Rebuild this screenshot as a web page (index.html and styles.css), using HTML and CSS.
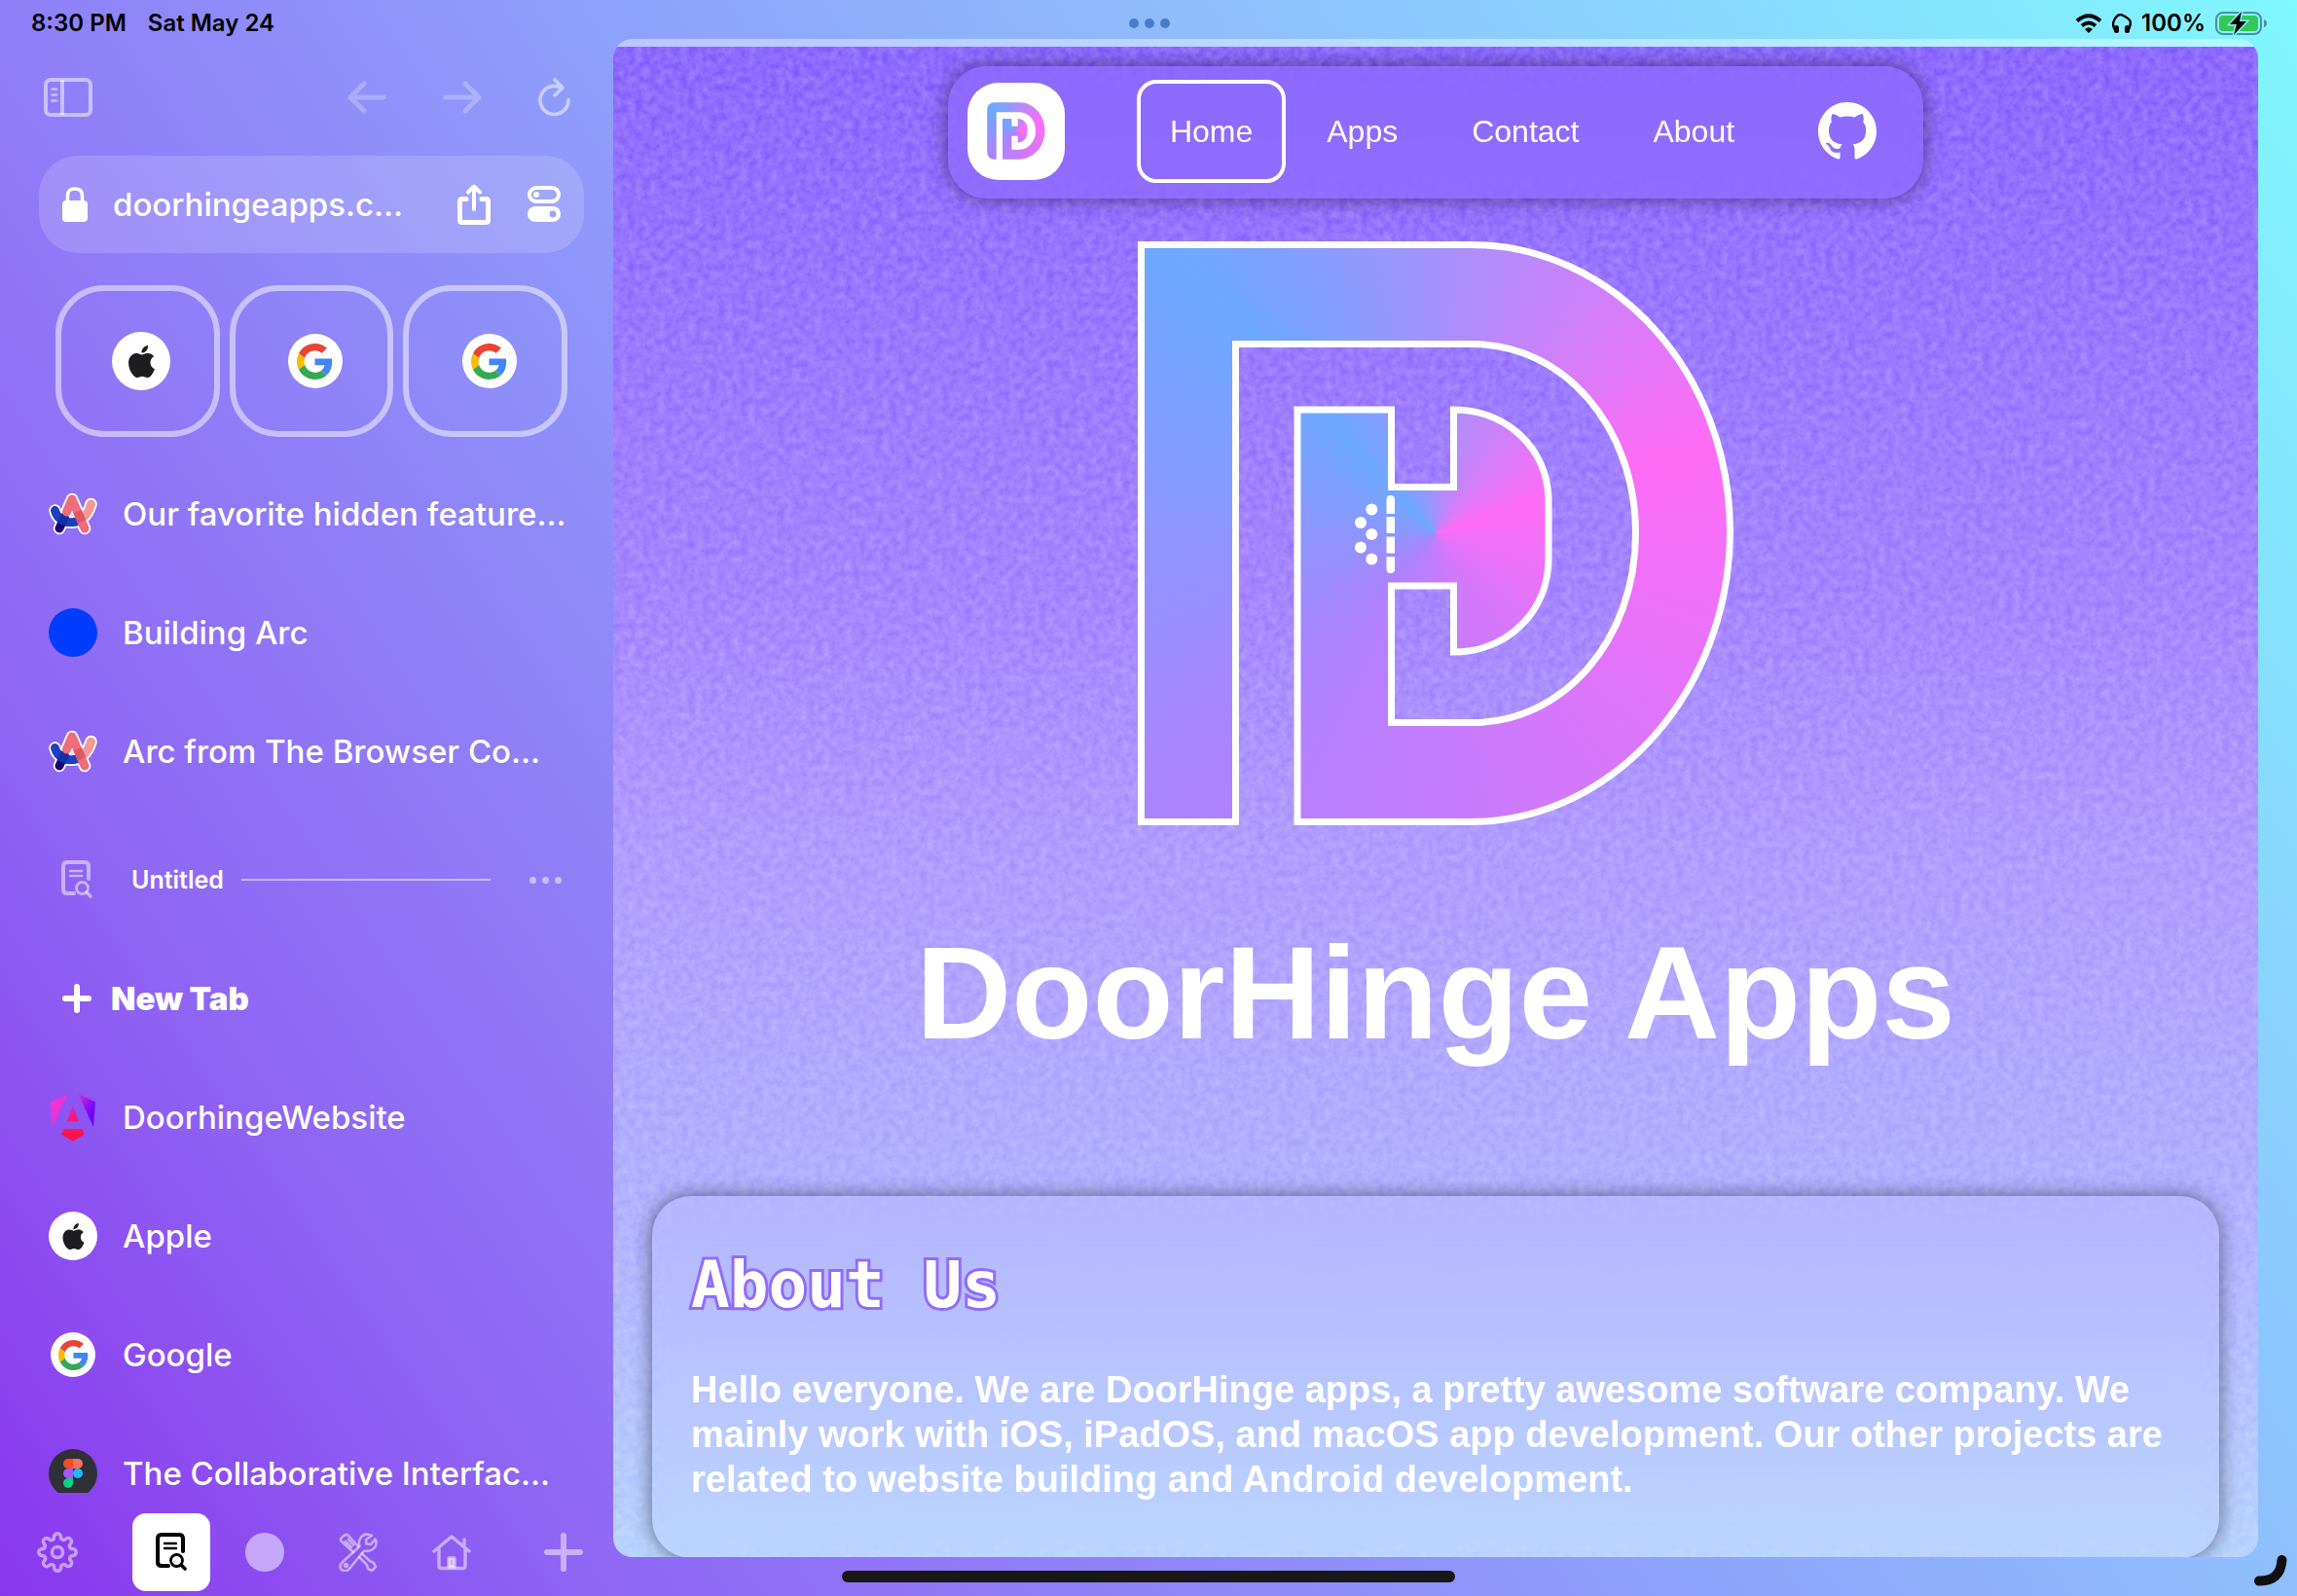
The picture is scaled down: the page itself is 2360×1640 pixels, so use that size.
FILE: index.html
```html
<!DOCTYPE html>
<html lang="en">
<head>
<meta charset="utf-8">
<meta name="viewport" content="width=device-width, initial-scale=1">
<title>DoorHinge Apps</title>
<link rel="stylesheet" href="styles.css">
</head>
<body>
<svg class="defs" aria-hidden="true">
  <defs>
    <path id="door" d="M3.500 3.500H341.500C490 3.500 608.500 136 608.500 298S490 596.500 341.500 596.500H164V173H260.500V252.500H324.500V173C380 173 422 214 422 267V326C422 380 380 422 324.500 422V354H260.500V494.500H344C437 494.500 511.500 410 511.500 300S437 105.500 344 105.500H100.500V596.500H3.500Z"/>
    <clipPath id="door-clip" clipPathUnits="objectBoundingBox"><use href="#door" transform="scale(.00163399 .00166667)"/></clipPath>
    <linearGradient id="ng1" x1="0" y1="0" x2="1" y2=".4"><stop offset="0" stop-color="#ff34d0"/><stop offset=".5" stop-color="#e030d8"/><stop offset="1" stop-color="#7000ff"/></linearGradient>
    <linearGradient id="ng2" x1="0" y1="0" x2="0" y2="1"><stop offset="0" stop-color="#f0209c" stop-opacity=".6"/><stop offset=".8" stop-color="#ff1048"/></linearGradient>
    <symbol id="apple" viewBox="0 0 24 24"><path d="M12.152 6.896c-.948 0-2.415-1.078-3.960-1.040-2.040.027-3.910 1.183-4.961 3.014-2.117 3.675-.546 9.103 1.519 12.090 1.013 1.454 2.208 3.090 3.792 3.039 1.520-.065 2.090-.987 3.935-.987 1.831 0 2.350.987 3.960.948 1.637-.026 2.676-1.480 3.676-2.948 1.156-1.688 1.636-3.325 1.662-3.415-.039-.013-3.182-1.221-3.220-4.857-.026-3.040 2.480-4.494 2.597-4.559-1.429-2.090-3.623-2.324-4.390-2.376-2-.156-3.675 1.090-4.610 1.090zM15.530 3.830c.843-1.012 1.400-2.427 1.245-3.830-1.207.052-2.662.805-3.532 1.818-.780.896-1.454 2.338-1.273 3.714 1.338.104 2.715-.688 3.559-1.701"/></symbol>
    <symbol id="google" viewBox="0 0 48 48">
      <path fill="#ea4335" d="M24 9.500c3.540 0 6.710 1.220 9.210 3.600l6.850-6.850C35.900 2.380 30.470 0 24 0 14.620 0 6.510 5.380 2.560 13.220l7.980 6.190C12.430 13.720 17.740 9.500 24 9.500z"/>
      <path fill="#4285f4" d="M46.980 24.550c0-1.570-.15-3.090-.38-4.550H24v9.020h12.940c-.58 2.960-2.260 5.480-4.780 7.180l7.730 6c4.510-4.180 7.090-10.360 7.090-17.650z"/>
      <path fill="#fbbc05" d="M10.530 28.590c-.48-1.450-.76-2.990-.76-4.590s.27-3.140.76-4.590l-7.980-6.190C.92 16.460 0 20.120 0 24c0 3.880.92 7.540 2.560 10.780l7.970-6.190z"/>
      <path fill="#34a853" d="M24 48c6.480 0 11.930-2.130 15.890-5.810l-7.730-6c-2.150 1.450-4.920 2.300-8.160 2.300-6.260 0-11.570-4.220-13.470-9.910l-7.980 6.190C6.510 42.620 14.620 48 24 48z"/>
    </symbol>
    <symbol id="arc" viewBox="0 0 50 44">
      <g fill="none" stroke="#fff" stroke-width="12.500" stroke-linecap="round" stroke-linejoin="round"><path d="M6.500 18.500C10 34 36 38 43.500 12"/><path d="M11 37L24 7L37 37"/></g>
      <g fill="none" stroke-width="9" stroke-linecap="round" stroke-linejoin="round">
        <path d="M43.500 12C42 18 40 21.500 37 24.500" stroke="#f49a96"/>
        <path d="M6.500 18.500C9 29 20 33 30 29.500" stroke="#1d3fc0"/>
        <path d="M11 37L13.500 31.500" stroke="#1c0079"/>
        <path d="M13 33L17 23" stroke="#1230a8" stroke-linecap="butt"/>
        <path d="M18.500 20L24 7L37 37" stroke="#ef6c7c"/>
        <path d="M29.500 19.500L34 30" stroke="#dd5767" stroke-linecap="butt"/>
      </g>
    </symbol>
    <symbol id="docsearch" viewBox="0 0 32 40">
      <g fill="none" stroke="currentColor" stroke-linecap="round">
        <path stroke-width="4" d="M13 34H6Q2 34 2 30V6Q2 2 6 2H24Q28 2 28 6V19"/>
        <path stroke-width="2.500" d="M9 11H21M9 16H21"/>
        <circle stroke-width="2.800" cx="21.500" cy="28.500" r="6"/><path stroke-width="3.600" d="M26 33L30 37"/>
      </g>
    </symbol>
  </defs>
</svg>

<header class="status">
  <div class="status-side"><span>8:30 PM</span><span>Sat May 24</span></div>
  <div class="multitask"><i></i><i></i><i></i></div>
  <div class="status-side status-right">
    <svg width="28" height="20" viewBox="0 0 28 20" fill="none" stroke="#000" stroke-width="4"><path d="M2 7.500Q14 -3 26 7.500M7 12.500Q14 6.500 21 12.500"/><path d="M10 16Q14 12.500 18 16L14 20Z" fill="#000" stroke="none"/></svg>
    <svg width="20" height="20" viewBox="0 0 20 20"><path d="M4 18Q-1 12 2.500 6T10 1.300T17.500 6T16 18" fill="none" stroke="#000" stroke-width="2.400"/><rect x="2" y="12" width="5" height="8" rx="2.500"/><rect x="13" y="12" width="5" height="8" rx="2.500"/></svg>
    <span>100%</span>
    <svg width="54" height="26" viewBox="0 0 54 26"><rect x="1" y="2" width="46" height="22" rx="7" fill="none" stroke="#4e8f9a" stroke-width="2"/><path d="M50 9Q53 10 53 13T50 17Z" fill="#4e8f9a"/><rect x="4" y="5" width="40" height="16" rx="4" fill="#34c759"/><path d="M27 1L15 14H22L19 25L32 11H25Z" fill="#000" stroke="#83f0fd" stroke-width="3" paint-order="stroke"/></svg>
  </div>
</header>

<div class="browser">
  <aside class="sidebar">
    <div class="toolbar">
      <button aria-label="Toggle sidebar"><svg width="50" height="40" viewBox="0 0 50 40" fill="none" stroke="currentColor"><rect x="2" y="2" width="46" height="36" rx="5" stroke-width="4"/><path d="M19 2V38" stroke-width="4"/><path d="M8.500 11.500H13M8.500 17.500H13M8.500 23.500H13" stroke-width="2.600" stroke-linecap="round"/></svg></button>
      <button class="push faint" aria-label="Back"><svg width="40" height="34" viewBox="0 0 40 34"><path d="M37 17H3M17 3L3 17L17 31" fill="none" stroke="currentColor" stroke-width="5" stroke-linecap="round" stroke-linejoin="round"/></svg></button>
      <button class="faint" aria-label="Forward"><svg width="40" height="34" viewBox="0 0 40 34"><path d="M3 17H37M23 3L37 17L23 31" fill="none" stroke="currentColor" stroke-width="5" stroke-linecap="round" stroke-linejoin="round"/></svg></button>
      <button aria-label="Reload"><svg width="34" height="40" viewBox="0 0 34 40"><path d="M31 22.500A14.500 14.500 0 1 1 24 10.500M17 2L25 10L17 18" fill="none" stroke="currentColor" stroke-width="3.600" stroke-linecap="round" stroke-linejoin="round"/></svg></button>
    </div>

    <div class="address">
      <svg width="26" height="36" viewBox="0 0 26 36"><rect y="14" width="26" height="22" rx="4" fill="#fff"/><path d="M5.500 16V9Q5.500 2 13 2T20.500 9V16" fill="none" stroke="#fff" stroke-width="3.600"/></svg>
      <button class="url">doorhingeapps.c...</button>
      <button aria-label="Share"><svg width="34" height="42" viewBox="0 0 34 42" fill="none" stroke="#fff" stroke-width="5" stroke-linecap="round" stroke-linejoin="round"><path d="M9 15.500H5Q2.500 15.500 2.500 18V37Q2.500 39.500 5 39.500H29Q31.500 39.500 31.500 37V18Q31.500 15.500 29 15.500H25"/><path d="M17 26V3M11 8.500L17 2.500L23 8.500" stroke-width="4"/></svg></button>
      <button aria-label="Site controls"><svg width="34" height="38" viewBox="0 0 34 38"><rect x="2" y="2" width="30" height="14" rx="7" fill="none" stroke="#fff" stroke-width="4"/><circle cx="9" cy="9" r="3" fill="#fff"/><rect y="21" width="34" height="16" rx="8" fill="#fff"/><circle cx="26" cy="29" r="3.400" fill="#9ea4f9"/></svg></button>
    </div>

    <div class="pins">
      <button class="pin" aria-label="Apple"><span class="disc disc-lg"><svg width="33" height="33" fill="#1d1d1f"><use href="#apple"/></svg></span></button>
      <button class="pin" aria-label="Google"><span class="disc disc-md"><svg width="37" height="37"><use href="#google"/></svg></span></button>
      <button class="pin" aria-label="Google"><span class="disc disc-md"><svg width="37" height="37"><use href="#google"/></svg></span></button>
    </div>

    <nav class="tabs" aria-label="Tabs">
      <a class="tab" href="#"><span class="fav"><svg width="50" height="44"><use href="#arc"/></svg></span>Our favorite hidden feature...</a>
      <a class="tab" href="#"><span class="fav"><span class="disc blue"></span></span>Building Arc</a>
      <a class="tab" href="#"><span class="fav"><svg width="50" height="44"><use href="#arc"/></svg></span>Arc from The Browser Co...</a>
      <div class="space">
        <svg width="32" height="40"><use href="#docsearch"/></svg>
        <span class="space-name">Untitled</span><hr>
        <button class="more" aria-label="Space options"><i></i><i></i><i></i></button>
      </div>
      <button class="tab new"><svg width="30" height="30" viewBox="0 0 30 30"><path d="M15 3V27M3 15H27" stroke="#fff" stroke-width="6" stroke-linecap="round"/></svg>New Tab</button>
      <a class="tab" href="#"><span class="fav"><svg width="46" height="49" viewBox="0 0 223 236"><path fill="url(#ng1)" d="m222.077 39.192-8.019 125.923L137.387 0l84.690 39.192ZM7.937 165.115 0 39.192 84.690 0 7.937 165.115Z"/><path fill="#e0209c" d="M111.039 62.675l30.357 73.803H80.681l30.358-73.803Z"/><path fill="url(#ng2)" d="m168.972 202.017-57.933 33.056-57.934-33.056 11.783-28.556h92.301l11.783 28.556ZM111.039 62.675l30.357 73.803H80.681l30.358-73.803Z"/></svg></span>DoorhingeWebsite</a>
      <a class="tab" href="#"><span class="fav"><span class="disc"><svg width="27" height="27" fill="#1d1d1f"><use href="#apple"/></svg></span></span>Apple</a>
      <a class="tab" href="#"><span class="fav"><span class="disc disc-sm"><svg width="31" height="31"><use href="#google"/></svg></span></span>Google</a>
      <a class="tab" href="#"><span class="fav"><span class="disc dark"><svg width="20" height="30" viewBox="0 0 20 30"><path fill="#f24e1e" d="M10 0H5a5 5 0 0 0 0 10h5Z"/><path fill="#ff7262" d="M10 0h5a5 5 0 0 1 0 10h-5Z"/><path fill="#a259ff" d="M10 10H5a5 5 0 0 0 0 10h5Z"/><circle fill="#1abcfe" cx="15" cy="15" r="5"/><path fill="#0acf83" d="M10 20H5a5 5 0 1 0 5 5Z"/></svg></span></span>The Collaborative Interfac...</a>
    </nav>

    <div class="dock">
      <button aria-label="Settings"><svg width="42" height="42" viewBox="0 0 24 24" fill="none" stroke="currentColor" stroke-width="2" stroke-linejoin="round"><circle cx="12" cy="12" r="3.200"/><path d="M19.400 15a1.650 1.650 0 0 0 .33 1.820l.06.06a2 2 0 0 1-2.830 2.830l-.06-.06a1.650 1.650 0 0 0-2.820 1.170V21a2 2 0 0 1-4 0v-.09A1.650 1.650 0 0 0 7.180 19.730l-.06.06a2 2 0 0 1-2.830-2.830l.06-.06A1.650 1.650 0 0 0 3.090 14H3a2 2 0 0 1 0-4h.09A1.650 1.650 0 0 0 4.270 7.180l-.06-.06a2 2 0 0 1 2.830-2.830l.06.06A1.650 1.650 0 0 0 10 3.090V3a2 2 0 0 1 4 0v.09a1.650 1.650 0 0 0 2.820 1.180l.06-.06a2 2 0 0 1 2.830 2.830l-.06.06A1.650 1.650 0 0 0 20.910 10H21a2 2 0 0 1 0 4h-.09a1.650 1.650 0 0 0-1.510 1z"/></svg></button>
      <button class="active" aria-label="Untitled space"><svg width="32" height="40"><use href="#docsearch"/></svg></button>
      <button aria-label="Space"><span class="dot"></span></button>
      <button aria-label="Tools space"><svg width="40" height="40" viewBox="0 0 40 40" fill="none" stroke="currentColor" stroke-width="2.600" stroke-linecap="round" stroke-linejoin="round"><path d="M15 20L3 9Q1 7 3 5L6 2.500Q8 1 10 3L20 14M7 9L13 15M10 7L15 12.500M21 25L29 33L30 37L34 39L38 35L36 31L32 29L24 21.500"/><path d="M34 3Q26 -1 22 6Q20 10 21.500 14L3 31Q0 35 3 38Q7 41 11 37L26 18.500Q33 20 37 15Q40 11 37.500 6.500L33 12L28.500 11.500L28 7Z"/><circle cx="7.500" cy="33.500" r="1.500"/></svg></button>
      <button aria-label="Home space"><svg width="40" height="38" viewBox="0 0 40 38" fill="none" stroke="currentColor" stroke-width="3.400" stroke-linecap="round" stroke-linejoin="round"><path d="M2 18L20 3L38 18M7 16V33Q7 35.500 9.500 35.500H31.500Q34 35.500 34 33V16M33 12V6"/><path fill="currentColor" d="M17 25H23V34H17Z"/></svg></button>
      <button class="add" aria-label="New space"><svg width="40" height="40" viewBox="0 0 40 40"><path d="M20 3V37M3 20H37" stroke="currentColor" stroke-width="6" stroke-linecap="round"/></svg></button>
    </div>
  </aside>

  <main class="view">
    <div class="page">
      <svg class="grain" aria-hidden="true"><filter id="grain" x="0" y="0" width="100%" height="100%"><feTurbulence type="fractalNoise" baseFrequency=".13" numOctaves="3" seed="4"/><feColorMatrix values="0 0 0 0 1  0 0 0 0 1  0 0 0 0 1  .36 0 0 0 -.06"/></filter><rect width="100%" height="100%" filter="url(#grain)"/></svg>
      <nav class="site-nav">
        <a class="brand" href="#" aria-label="DoorHinge Apps"><span class="mark-small"></span></a>
        <div class="links">
          <a class="current" href="#">Home</a>
          <a href="#">Apps</a>
          <a href="#">Contact</a>
          <a href="#">About</a>
        </div>
        <a class="github" href="#" aria-label="GitHub"><svg width="60" height="60" viewBox="0 0 16 16" fill="#fff"><path d="M8 0C3.580 0 0 3.580 0 8c0 3.540 2.290 6.530 5.470 7.590.4.070.55-.17.55-.38 0-.19-.01-.82-.01-1.490-2.010.37-2.530-.49-2.690-.94-.09-.23-.48-.94-.82-1.130-.28-.15-.68-.52-.01-.53.63-.01 1.080.58 1.230.82.72 1.210 1.870.87 2.330.66.07-.52.28-.87.51-1.070-1.780-.2-3.640-.89-3.640-3.950 0-.87.31-1.590.82-2.150-.08-.2-.36-1.020.08-2.120 0 0 .67-.21 2.200.82.64-.18 1.320-.27 2-.27s1.360.09 2 .27c1.530-1.040 2.200-.82 2.200-.82.44 1.100.16 1.920.08 2.120.51.56.82 1.270.82 2.150 0 3.070-1.870 3.750-3.650 3.950.29.25.54.73.54 1.480 0 1.070-.01 1.930-.01 2.200 0 .21.15.46.55.38A8.010 8.010 0 0 0 16 8c0-4.420-3.580-8-8-8Z"/></svg></a>
      </nav>
      <section class="hero">
        <div class="mark">
          <div class="mark-fill"></div>
          <svg class="mark-line" viewBox="0 0 612 600" aria-hidden="true">
            <use href="#door" fill="none" stroke="#fff" stroke-width="7"/>
            <g fill="#fff"><path d="M255.500 280V265Q255.500 261 259.700 261T264 265V280ZM255.500 283H264V300H255.500ZM255.500 303.500H264V320.500H255.500ZM255.500 324H264V337Q264 341 259.700 341T255.500 337Z"/><circle cx="240.300" cy="275.500" r="6"/><circle cx="229" cy="289" r="6"/><circle cx="240.300" cy="301" r="6"/><circle cx="229" cy="314.500" r="6"/><circle cx="240.300" cy="326.500" r="6"/></g>
          </svg>
        </div>
        <h1>DoorHinge Apps</h1>
      </section>
      <section class="card">
        <h2>About Us</h2>
        <p>Hello everyone. We are DoorHinge apps, a pretty awesome software company. We mainly work with iOS, iPadOS, and macOS app development. Our other projects are related to website building and Android development.</p>
      </section>
    </div>
  </main>
</div>
<div class="home-bar"></div>
<svg class="corner" width="34" height="32" viewBox="0 0 34 32" aria-hidden="true"><path d="M5 26.500Q27 27 28.500 5" fill="none" stroke="#111" stroke-width="10" stroke-linecap="round"/></svg>
</body>
</html>
```
FILE: styles.css
```css
* { box-sizing: border-box; }
body {
  margin: 0;
  height: 100vh;
  display: flex;
  flex-direction: column;
  overflow: hidden;
  color: #fff;
  font-family: Inter, "Liberation Sans", sans-serif;
  background: linear-gradient(56deg, #8a36ee 0%, #8f66f4 18%, #907ff8 32%, #8ea2fb 50%, #8fbffd 68%, #80f8ff 100%);
}
button { padding: 0; border: 0; background: none; color: inherit; font: inherit; }
a { color: inherit; text-decoration: none; }
svg { display: block; flex: none; }
.defs { position: absolute; width: 0; height: 0; }

/* Status bar */
.status {
  display: grid;
  grid-template-columns: 1fr auto 1fr;
  align-items: center;
  height: 40px;
  padding: 8px 30px 0 32px;
  color: #000;
  font-size: 24px;
  font-weight: 600;
  line-height: 32px;
}
.status-side { display: flex; align-items: center; gap: 22px; }
.status-right { justify-content: flex-end; gap: 10px; }
.multitask, .more { display: flex; gap: 6px; }
.multitask i { width: 10px; height: 10px; border-radius: 50%; background: #477dc6; }

.browser { flex: 1; min-height: 0; display: flex; }

/* Sidebar */
.sidebar { width: 630px; flex: none; display: flex; flex-direction: column; }
.toolbar {
  display: flex;
  align-items: center;
  gap: 58px;
  height: 120px;
  padding: 0 43px 0 45px;
  color: rgba(255, 255, 255, .5);
}
.push { margin-left: auto; }
.faint { color: rgba(255, 255, 255, .25); }
.address {
  display: flex;
  align-items: center;
  height: 100px;
  margin: 0 30px 0 40px;
  padding: 0 24px;
  gap: 38px;
  border-radius: 40px;
  background: rgba(255, 255, 255, .16);
}
.url { flex: 1; margin-left: -12px; text-align: left; font-size: 33px; font-weight: 500; line-height: 40px; }
.pins { display: grid; grid-template-columns: repeat(3, 1fr); gap: 10px; margin: 33px 47px 18px 57px; }
.pin {
  display: flex;
  align-items: center;
  justify-content: center;
  height: 156px;
  padding-left: 8px;
  border: 6px solid rgba(255, 255, 255, .5);
  border-radius: 50px;
}
.disc {
  display: flex;
  align-items: center;
  justify-content: center;
  width: 50px;
  height: 50px;
  border-radius: 50%;
  background: #fff;
}
.disc-lg { width: 60px; height: 60px; }
.disc-md { width: 56px; height: 56px; }
.disc-sm { width: 46px; height: 46px; }
.blue { background: #003cff; }
.dark { background: #2f3038; }
.tabs { flex: 1; min-height: 0; overflow: hidden; padding: 0 45px 0 50px; }
.tab {
  display: flex;
  align-items: center;
  gap: 26px;
  height: 122px;
  font-size: 33px;
  font-weight: 500;
  white-space: nowrap;
}
.fav { display: flex; justify-content: center; width: 50px; }
.new { gap: 20px; padding-left: 14px; font-weight: 900; }
.space {
  display: flex;
  align-items: center;
  height: 132px;
  padding: 10px 8px 0 13px;
  color: rgba(255, 255, 255, .5);
}
.space-name { margin: 0 18px 0 40px; color: #fff; font-size: 25px; font-weight: 600; }
.space hr { flex: 1; height: 2px; margin: 0 40px 0 0; border: 0; background: rgba(255, 255, 255, .5); }
.more i { width: 7px; height: 7px; border-radius: 50%; background: currentColor; }
.dock {
  display: flex;
  align-items: center;
  gap: 56px;
  height: 106px;
  padding: 16px 31px 0 38px;
  color: rgba(255, 255, 255, .5);
}
.dock .active {
  display: flex;
  align-items: center;
  justify-content: center;
  width: 80px;
  height: 80px;
  margin-right: -20px;
  border-radius: 14px;
  color: #000;
  background: #fff;
}
.dot { display: block; width: 40px; height: 40px; border-radius: 50%; background: currentColor; }
.dock .add { margin-left: auto; }

/* Web view */
.view {
  flex: 1;
  min-width: 0;
  margin: 0 40px 40px 0;
  padding-top: 8px;
  border-radius: 20px;
  overflow: hidden;
  background: rgba(255, 255, 255, .4);
}
.page {
  position: relative;
  height: 100%;
  padding: 20px 40px 0;
  overflow: hidden;
  font-family: "Liberation Sans", Arial, sans-serif;
  background: linear-gradient(#7e56ff 0%, #9976ff 36%, #a68fff 53%, #a8a6ff 76%, #aecdff 100%);
}
.grain { position: absolute; inset: 0; width: 100%; height: 100%; }
.site-nav {
  position: relative;
  display: flex;
  align-items: center;
  width: fit-content;
  height: 136px;
  margin: 0 auto 44px;
  padding: 0 48px 3px 20px;
  border-radius: 40px;
  background: rgba(140, 104, 255, .5);
  backdrop-filter: blur(20px);
  box-shadow: 0 0 20px rgba(0, 0, 0, .5);
}
.brand {
  display: flex;
  align-items: center;
  justify-content: center;
  width: 100px;
  height: 100px;
  border-radius: 32px;
  background: #fff;
}
.mark-small, .mark-fill {
  background: conic-gradient(from 72deg, #ff6cf6, #ad82ff 150deg, #6ea8ff 245deg, #ff6cf6);
  clip-path: url(#door-clip);
}
.mark-small { width: 60px; height: 59px; border-radius: 8px 0 0 8px; }
.links { display: flex; gap: 8px; margin: 0 52px 0 74px; font-size: 32px; line-height: 36px; }
.links a { padding: 31px 30px; border: 4px solid transparent; border-radius: 20px; }
.links .current { border-color: #fff; }
.hero { position: relative; }
.mark { position: relative; width: 612px; height: 600px; margin: 0 auto; }
.mark-fill { height: 100%; }
.mark-line { position: absolute; inset: 0; width: 100%; height: 100%; overflow: visible; }
h1 { margin: 95px 0 132px; text-align: center; font-size: 136px; line-height: 154px; }
.card {
  position: relative;
  padding: 60px 40px 58px;
  border-radius: 40px;
  background: rgba(255, 255, 255, .05);
  backdrop-filter: blur(20px);
  box-shadow: 0 0 20px rgba(0, 0, 0, .5);
}
h2 {
  margin: 0 0 52px;
  font-family: "DejaVu Sans Mono", monospace;
  font-size: 66px;
  line-height: 64px;
  -webkit-text-stroke: 6px #916bff;
  paint-order: stroke fill;
}
.card p { margin: 0; font-size: 38px; font-weight: 700; line-height: 46px; }

/* System overlays */
.home-bar {
  position: fixed;
  left: 50%;
  bottom: 14px;
  width: 630px;
  height: 12px;
  margin-left: -315px;
  border-radius: 6px;
  background: #181818;
}
.corner { position: fixed; right: 10px; bottom: 10px; }
```
